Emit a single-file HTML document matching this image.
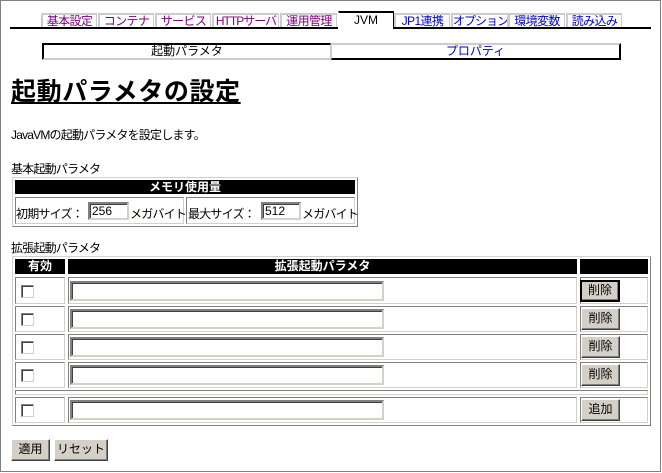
<!DOCTYPE html>
<html><head><meta charset="utf-8"><style>
*{margin:0;padding:0;box-sizing:border-box}
body{width:662px;height:473px;background:#fff;font-family:"Liberation Sans","Noto Sans CJK JP",sans-serif;font-size:12px;color:#000;position:relative;overflow:hidden}
.frame{position:absolute;left:0;top:0;width:661px;height:472px;border:1px solid #808080}
.a{position:absolute}
.tab{position:absolute;top:13px;height:15px;background:#fff;border-top:2px solid #ccc;border-left:2px solid #ccc;border-right:1px solid #ccc;font-size:12px;letter-spacing:-0.6px;line-height:13px;text-align:center;color:#800080;white-space:nowrap;overflow:hidden}
.tab.b{color:#00c}
.tab.act{top:11px;height:18px;border:none;border-top:2px solid #000;border-left:1px solid #fff;border-right:1px solid #000;color:#000;background:#fff;z-index:2;line-height:14px;letter-spacing:0}
.hd{background:#000;color:#fff;font-weight:bold;text-align:center;font-size:12px;line-height:14px}
.cell{position:absolute;border:1px solid;border-color:#808080 #d4d0c8 #d4d0c8 #808080}
.inp{position:absolute;background:#fff;border:2px solid;border-color:#808080 #d4d0c8 #d4d0c8 #808080;box-shadow:inset 1px 1px 0 #404040;font-size:12px;line-height:14px;padding-left:2px}
.cb{position:absolute;width:13px;height:13px;border:1px solid;border-color:#808080 #d4d0c8 #d4d0c8 #808080;background:#fff;box-shadow:inset 1px 1px 0 #404040}
.btn{position:absolute;background:#d4d0c8;border:1px solid;border-color:#fff #404040 #404040 #fff;box-shadow:inset -1px -1px 0 #808080;font-size:12px;text-align:center;line-height:18px}
.s{letter-spacing:-0.8px}
</style></head><body>
<div class="frame"></div>
<div class="tab" style="left:41px;width:56px">基本設定</div>
<div class="tab" style="left:98px;width:56px">コンテナ</div>
<div class="tab" style="left:155px;width:56px">サービス</div>
<div class="tab" style="left:212px;width:67px;letter-spacing:-1px">HTTPサーバ</div>
<div class="tab" style="left:280px;width:57px">運用管理</div>
<div class="tab act" style="left:338px;width:56px">JVM</div>
<div class="tab b" style="left:394px;width:56px">JP1連携</div>
<div class="tab b" style="left:451px;width:57px;letter-spacing:-1px">オプション</div>
<div class="tab b" style="left:508px;width:57px">環境変数</div>
<div class="tab b" style="left:566px;width:56px">読み込み</div>
<div class="a" style="left:10px;top:27px;width:641px;height:2px;background:#000"></div>

<div class="a" style="left:42px;top:43px;width:289px;height:17px;border-top:2px solid #000;border-left:2px solid #000;border-right:1px solid #ccc;border-bottom:2px solid #ccc;text-align:center;line-height:12px">起動パラメタ</div>
<div class="a" style="left:331px;top:43px;width:290px;height:17px;border-top:2px solid #ccc;border-left:1px solid #ccc;border-right:2px solid #000;border-bottom:2px solid #000;text-align:center;line-height:12px;color:#00c">プロパティ</div>

<div class="a" style="left:11px;top:76px;font-size:25px;font-weight:bold;letter-spacing:0.6px;text-decoration:underline;line-height:32px;white-space:nowrap">起動パラメタの設定</div>
<div class="a s" style="left:11px;top:126px;white-space:nowrap">JavaVMの起動パラメタを設定します。</div>
<div class="a s" style="left:11px;top:160px;white-space:nowrap">基本起動パラメタ</div>

<div class="a" style="left:12px;top:177px;width:346px;height:50px;border:1px solid;border-color:#d4d0c8 #808080 #808080 #d4d0c8"></div>
<div class="a hd" style="left:15px;top:180px;width:340px;height:14px">メモリ使用量</div>
<div class="cell" style="left:15px;top:197px;width:169px;height:27px"></div>
<div class="cell" style="left:186px;top:197px;width:169px;height:27px"></div>
<div class="a s" style="left:16px;top:205px;white-space:nowrap">初期サイズ：</div>
<div class="inp" style="left:88px;top:202px;width:41px;height:18px">256</div>
<div class="a s" style="left:130px;top:205px;white-space:nowrap">メガバイト</div>
<div class="a s" style="left:188px;top:205px;white-space:nowrap">最大サイズ：</div>
<div class="inp" style="left:261px;top:202px;width:40px;height:18px">512</div>
<div class="a s" style="left:302px;top:205px;white-space:nowrap">メガバイト</div>

<div class="a s" style="left:11px;top:239px;white-space:nowrap">拡張起動パラメタ</div>
<div class="a" style="left:12px;top:256px;width:639px;height:170px;border:1px solid;border-color:#d4d0c8 #808080 #808080 #d4d0c8"></div>
<div class="a hd" style="left:15px;top:259px;width:50px;height:15px">有効</div>
<div class="a hd" style="left:68px;top:259px;width:509px;height:15px">拡張起動パラメタ</div>
<div class="a hd" style="left:580px;top:259px;width:68px;height:15px"></div>

<div class="cell" style="left:15px;top:277px;width:50px;height:27px"></div><div class="cell" style="left:68px;top:277px;width:509px;height:27px"></div><div class="cell" style="left:580px;top:277px;width:68px;height:27px"></div>
<div class="cb" style="left:21px;top:285px"></div><div class="inp" style="left:70px;top:281px;width:314px;height:20px"></div>
<div class="btn" style="left:580px;top:280px;width:40px;height:22px;border:2px solid #000;line-height:16px">削除</div>

<div class="cell" style="left:15px;top:306px;width:50px;height:26px"></div><div class="cell" style="left:68px;top:306px;width:509px;height:26px"></div><div class="cell" style="left:580px;top:306px;width:68px;height:26px"></div>
<div class="cb" style="left:21px;top:313px"></div><div class="inp" style="left:70px;top:309px;width:314px;height:20px"></div>
<div class="btn" style="left:581px;top:308px;width:39px;height:22px">削除</div>

<div class="cell" style="left:15px;top:334px;width:50px;height:26px"></div><div class="cell" style="left:68px;top:334px;width:509px;height:26px"></div><div class="cell" style="left:580px;top:334px;width:68px;height:26px"></div>
<div class="cb" style="left:21px;top:341px"></div><div class="inp" style="left:70px;top:337px;width:314px;height:20px"></div>
<div class="btn" style="left:581px;top:336px;width:39px;height:22px">削除</div>

<div class="cell" style="left:15px;top:362px;width:50px;height:26px"></div><div class="cell" style="left:68px;top:362px;width:509px;height:26px"></div><div class="cell" style="left:580px;top:362px;width:68px;height:26px"></div>
<div class="cb" style="left:21px;top:369px"></div><div class="inp" style="left:70px;top:365px;width:314px;height:20px"></div>
<div class="btn" style="left:581px;top:364px;width:39px;height:22px">削除</div>

<div class="cell" style="left:15px;top:390px;width:633px;height:5px"></div>

<div class="cell" style="left:15px;top:397px;width:50px;height:26px"></div><div class="cell" style="left:68px;top:397px;width:509px;height:26px"></div><div class="cell" style="left:580px;top:397px;width:68px;height:26px"></div>
<div class="cb" style="left:21px;top:404px"></div><div class="inp" style="left:70px;top:400px;width:314px;height:20px"></div>
<div class="btn" style="left:581px;top:399px;width:39px;height:22px">追加</div>

<div class="btn" style="left:11px;top:439px;width:39px;height:22px">適用</div>
<div class="btn" style="left:54px;top:439px;width:54px;height:22px">リセット</div>
</body></html>
